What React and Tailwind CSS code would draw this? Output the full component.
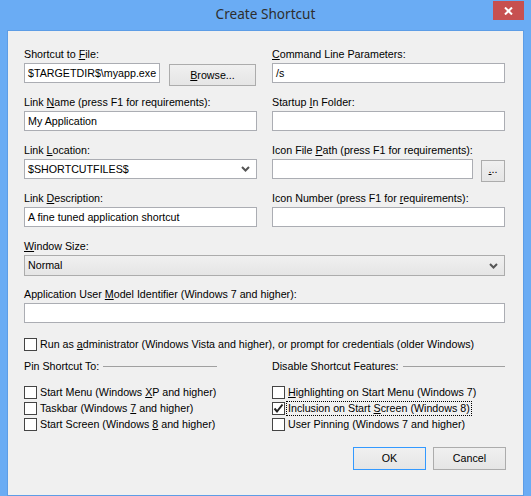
import React from 'react';

// Win8-style "Create Shortcut" dialog

function Label({ children, className = '' }) {
  return <div className={`h-[13px] leading-[13px] mb-[2px] whitespace-nowrap ${className}`}>{children}</div>;
}

function Edit({ value = '', className = '' }) {
  return (
    <div className={`h-[20px] bg-white border border-[#abadb3] pl-[3px] leading-[18px] whitespace-nowrap overflow-hidden ${className}`}>
      {value}
    </div>
  );
}

function Chevron() {
  return (
    <svg width="9" height="6" viewBox="0 0 9 6" className="shrink-0">
      <path d="M1 1 L4.5 4.5 L8 1" stroke="#555" strokeWidth="2" fill="none" />
    </svg>
  );
}

function Button({ children, isDefault = false, className = '' }) {
  return (
    <div
      className={`flex items-center justify-center bg-gradient-to-b from-[#f0f0f0] to-[#e5e5e5] border ${
        isDefault ? 'border-[#3399ff]' : 'border-[#acacac]'
      } ${className}`}
    >
      {children}
    </div>
  );
}

function Check({ checked = false, focused = false, children }) {
  return (
    <div className="flex items-center h-[13px] leading-[13px] whitespace-nowrap">
      <div className="w-[13px] h-[13px] border border-[#444] bg-white shrink-0 flex items-center justify-center">
        {checked && (
          <svg width="11" height="11" viewBox="0 0 11 11">
            <path d="M1.5 5.5 L4 8.5 L9.5 1.5" stroke="#222" strokeWidth="2" fill="none" />
          </svg>
        )}
      </div>
      <span className={`ml-[2px] px-[1px] ${focused ? 'outline outline-1 outline-dotted outline-black' : ''}`}>{children}</span>
    </div>
  );
}

function Group({ title, className = '', lineClass = '' }) {
  return (
    <div className={`flex items-center h-[13px] leading-[13px] whitespace-nowrap ${className}`}>
      <span>{title}</span>
      <div className={`flex-1 border-t border-[#a0a0a0] ml-[4px] ${lineClass}`} />
    </div>
  );
}

export default function App() {
  return (
    <div className="w-[531px] h-[496px] bg-[#6aacf4] flex flex-col overflow-hidden font-['Liberation_Sans',Tahoma,sans-serif] text-[10.7px] text-black">
      {/* title bar */}
      <div className="relative h-[30px] shrink-0 flex items-center justify-center">
        <span className="font-['Noto_Sans',sans-serif] text-[13.6px] text-[#2e2e2e] -mt-[1px]">Create Shortcut</span>
        <div className="absolute right-[7px] top-[1px] w-[31px] h-[19px] bg-[#c75050] flex items-center justify-center">
          <svg width="9" height="8" viewBox="0 0 9 8">
            <path d="M1 0.5 L8 7.5 M8 0.5 L1 7.5" stroke="#fff" strokeWidth="2" />
          </svg>
        </div>
      </div>

      {/* client area */}
      <div className="flex-1 mx-[7px] border border-[#5d9de6] bg-[#f0f0f0] pl-[16px] pr-[18px] pt-[17px]">
        <div className="grid grid-cols-[233px_233px] gap-x-[15px] gap-y-[13px]">
          <div>
            <Label>Shortcut to <u>F</u>ile:</Label>
            <div className="flex h-[20px]">
              <Edit value="$TARGETDIR$\myapp.exe" className="w-[136px]" />
              <Button className="ml-[9px] mt-[1px] w-[87px] h-[22px] shrink-0">
                <span><u>B</u>rowse...</span>
              </Button>
            </div>
          </div>
          <div>
            <Label><u>C</u>ommand Line Parameters:</Label>
            <Edit value="/s" />
          </div>

          <div>
            <Label>Link <u>N</u>ame (press F1 for requirements):</Label>
            <Edit value="My Application" />
          </div>
          <div>
            <Label>Startup <u>I</u>n Folder:</Label>
            <Edit />
          </div>

          <div>
            <Label>Link <u>L</u>ocation:</Label>
            <div className="h-[20px] bg-white border border-[#abadb3] pl-[3px] pr-[6px] flex items-center justify-between leading-[18px]">
              <span>$SHORTCUTFILES$</span>
              <Chevron />
            </div>
          </div>
          <div>
            <Label>Icon File <u>P</u>ath (press F1 for requirements):</Label>
            <div className="flex h-[20px]">
              <Edit className="w-[201px]" />
              <Button className="ml-[8px] mt-[1px] w-[24px] h-[22px] shrink-0">
                <span className="-mt-[3px]"><u>.</u>..</span>
              </Button>
            </div>
          </div>

          <div>
            <Label>Link <u>D</u>escription:</Label>
            <Edit value="A fine tuned application shortcut" />
          </div>
          <div>
            <Label>Icon Number (press F1 for <u>r</u>equirements):</Label>
            <Edit />
          </div>
        </div>

        <div className="mt-[13px]">
          <Label><u>W</u>indow Size:</Label>
          <div className="h-[21px] bg-gradient-to-b from-[#f0f0f0] to-[#e5e5e5] border border-[#acacac] pl-[3px] pr-[6px] flex items-center justify-between">
            <span>Normal</span>
            <Chevron />
          </div>
        </div>

        <div className="mt-[12px]">
          <Label>Application User <u>M</u>odel Identifier (Windows 7 and higher):</Label>
          <Edit />
        </div>

        <div className="mt-[15px]">
          <Check>Run as <u>a</u>dministrator (Windows Vista and higher), or prompt for credentials (older Windows)</Check>
        </div>

        <div className="mt-[9px] grid grid-cols-[233px_233px] gap-x-[15px]">
          <div>
            <Group title="Pin Shortcut To:" className="w-[193px]" />
            <div className="mt-[13px] flex flex-col gap-[3px]">
              <Check>Start Menu (Windows <u>X</u>P and higher)</Check>
              <Check>Taskbar (Windows <u>7</u> and higher)</Check>
              <Check>Start Screen (Windows <u>8</u> and higher)</Check>
            </div>
          </div>
          <div>
            <Group title="Disable Shortcut Features:" />
            <div className="mt-[13px] flex flex-col gap-[3px]">
              <Check><u>H</u>ighlighting on Start Menu (Windows 7)</Check>
              <Check checked focused>Inclusion on Start <u>S</u>creen (Windows 8)</Check>
              <Check>User Pinnin<u>g</u> (Windows 7 and higher)</Check>
            </div>
          </div>
        </div>

        <div className="mt-[16px] flex justify-end gap-[7px] -mr-[1px]">
          <Button isDefault className="w-[73px] h-[23px]">OK</Button>
          <Button className="w-[73px] h-[23px]">Cancel</Button>
        </div>
      </div>
    </div>
  );
}
